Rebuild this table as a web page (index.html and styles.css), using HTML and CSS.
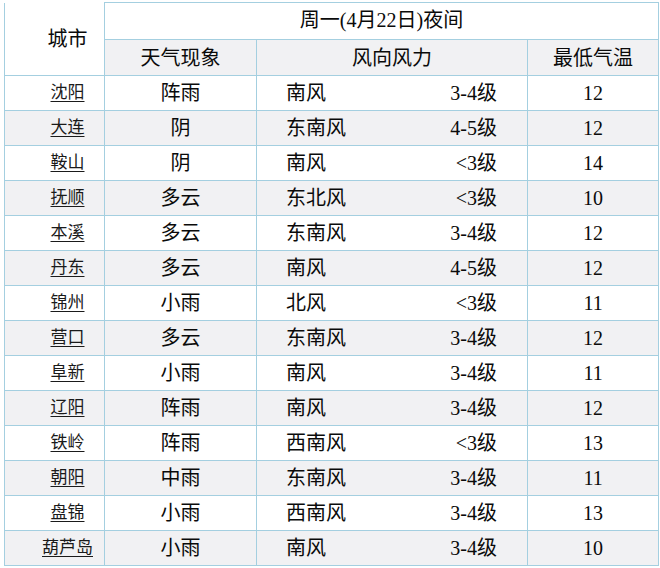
FILE: index.html
```html
<!DOCTYPE html>
<html lang="zh">
<head>
<meta charset="utf-8">
<link rel="stylesheet" href="styles.css">
</head>
<body>
<table class="wx">
  <colgroup>
    <col class="c-city"><col class="c-wx"><col class="c-wind"><col class="c-temp">
  </colgroup>
  <thead>
    <tr class="h1">
      <th rowspan="2" class="city-h">城市</th>
      <th colspan="3" class="date">周一(4月22日)夜间</th>
    </tr>
    <tr class="h2">
      <th>天气现象</th>
      <th>风向风力</th>
      <th>最低气温</th>
    </tr>
  </thead>
  <tbody>
    <tr><td class="city"><a>沈阳</a></td><td>阵雨</td><td class="wind"><span>南风</span><span>3-4级</span></td><td>12</td></tr>
    <tr><td class="city"><a>大连</a></td><td>阴</td><td class="wind"><span>东南风</span><span>4-5级</span></td><td>12</td></tr>
    <tr><td class="city"><a>鞍山</a></td><td>阴</td><td class="wind"><span>南风</span><span>&lt;3级</span></td><td>14</td></tr>
    <tr><td class="city"><a>抚顺</a></td><td>多云</td><td class="wind"><span>东北风</span><span>&lt;3级</span></td><td>10</td></tr>
    <tr><td class="city"><a>本溪</a></td><td>多云</td><td class="wind"><span>东南风</span><span>3-4级</span></td><td>12</td></tr>
    <tr><td class="city"><a>丹东</a></td><td>多云</td><td class="wind"><span>南风</span><span>4-5级</span></td><td>12</td></tr>
    <tr><td class="city"><a>锦州</a></td><td>小雨</td><td class="wind"><span>北风</span><span>&lt;3级</span></td><td>11</td></tr>
    <tr><td class="city"><a>营口</a></td><td>多云</td><td class="wind"><span>东南风</span><span>3-4级</span></td><td>12</td></tr>
    <tr><td class="city"><a>阜新</a></td><td>小雨</td><td class="wind"><span>南风</span><span>3-4级</span></td><td>11</td></tr>
    <tr><td class="city"><a>辽阳</a></td><td>阵雨</td><td class="wind"><span>南风</span><span>3-4级</span></td><td>12</td></tr>
    <tr><td class="city"><a>铁岭</a></td><td>阵雨</td><td class="wind"><span>西南风</span><span>&lt;3级</span></td><td>13</td></tr>
    <tr><td class="city"><a>朝阳</a></td><td>中雨</td><td class="wind"><span>东南风</span><span>3-4级</span></td><td>11</td></tr>
    <tr><td class="city"><a>盘锦</a></td><td>小雨</td><td class="wind"><span>西南风</span><span>3-4级</span></td><td>13</td></tr>
    <tr><td class="city"><a>葫芦岛</a></td><td>小雨</td><td class="wind"><span>南风</span><span>3-4级</span></td><td>10</td></tr>
  </tbody>
</table>
</body>
</html>
```

FILE: styles.css
```css
html, body {
  margin: 0;
  padding: 0;
  background: #ffffff;
}
body {
  padding: 2px 0 0 4px;
  font-family: "Liberation Serif", "Noto Sans CJK SC", serif;
  color: #0a0a0a;
}
.wx {
  border-collapse: collapse;
  table-layout: fixed;
  width: 654px;
}
.c-city { width: 100px; }
.c-wx { width: 152px; }
.c-wind { width: 271px; }
.c-temp { width: 131px; }

.wx th, .wx td {
  border: 1px solid #a4cfe0;
  padding: 0;
  height: 34px;
  text-align: center;
  vertical-align: middle;
  font-size: 20px;
  font-weight: normal;
  line-height: 24px;
}
.h2 th {
  background: #f1f1f3;
  height: 35px;
}
.city-h {
  background: #ffffff;
  padding-left: 26px !important;
  border-top-color: #ffffff !important;
}
.date {
  padding-bottom: 2px !important;
}
.wx tbody tr:nth-child(even) td {
  background: #f1f1f3;
}
.wx td.city {
  padding-left: 26px;
  font-size: 17px;
}
.city a {
  color: #1a1a1a;
  text-decoration: underline;
  text-underline-offset: 3px;
}
.wx td.wind {
  text-align: left;
  padding: 0 30px 0 29px;
}
.wind span:last-child {
  float: right;
}
```
